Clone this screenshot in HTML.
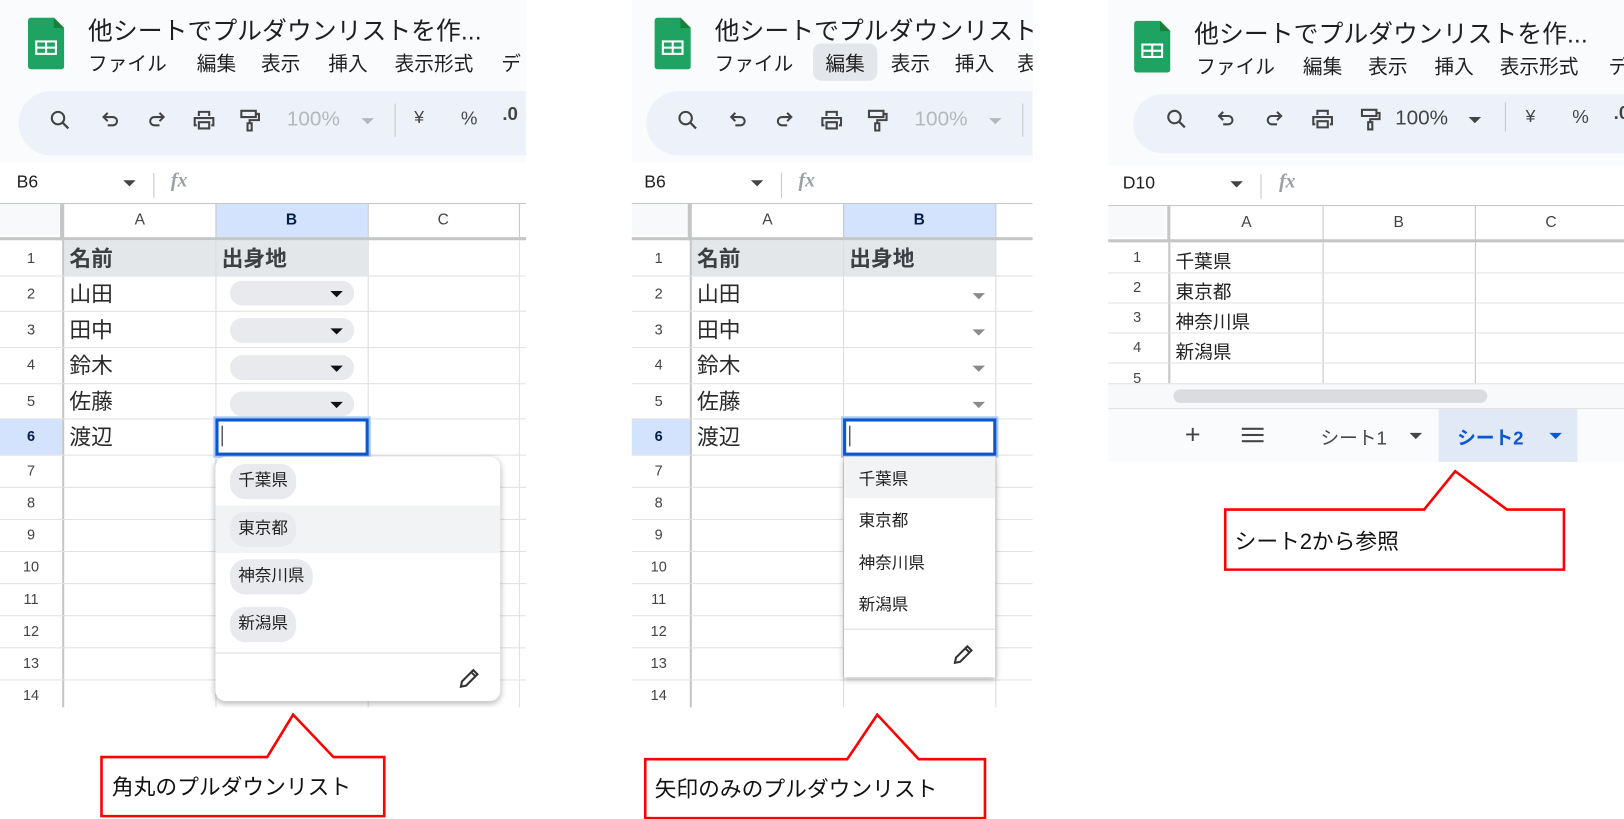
<!DOCTYPE html>
<html><head><meta charset="utf-8">
<style>
*{margin:0;padding:0;box-sizing:border-box}
html,body{width:1624px;height:819px;overflow:hidden;background:#fff}
body{font-family:"Liberation Sans","Noto Sans CJK JP",sans-serif;color:#1f1f1f}
#root{position:absolute;left:0;top:0;width:1568px;height:791px;transform:scale(1.03571);transform-origin:0 0}
.p{position:absolute;top:0;overflow:hidden;background:#fff}
.in{position:absolute;left:0;top:0;width:700px;height:800px}
.a{position:absolute;white-space:nowrap}
.hdr{position:absolute;left:0;top:0;width:700px;height:157px;background:#f9fbfd}
.title{font-size:24px;top:10px;color:#1f1f1f}
.menu{font-size:19px;top:47px;color:#1f1f1f}
.tb{position:absolute;left:18px;top:88px;width:700px;height:62px;border-radius:31px;background:#edf2fa}
.ic{position:absolute;top:104px}
.hl{position:absolute;height:1px;background:#e1e1e1}
.vl{position:absolute;width:1px;background:#e1e1e1}
.rn{position:absolute;left:0;width:60px;text-align:center;font-size:14px;color:#444}
.cell{font-size:21px;color:#2a2a2a}
.chip{position:absolute;left:222px;width:120px;height:24px;border-radius:12px;background:#e8eaed}
.tri{position:absolute;width:0;height:0;border-left:6px solid transparent;border-right:6px solid transparent;border-top:6px solid #111}
.tri2{position:absolute;width:0;height:0;border-left:6px solid transparent;border-right:6px solid transparent;border-top:6px solid #8a8a8a}
.dd{position:absolute;background:#fff;box-shadow:0 2px 6px rgba(0,0,0,.3)}
.pill{position:absolute;left:14px;height:34px;line-height:34px;padding:0 8px;border-radius:15px;background:#e8eaed;font-size:16px;color:#222}
.cl{position:absolute;font-size:21px;color:#111}
</style></head><body><div id="root">

<!-- PANEL 1 -->
<div class="p" style="left:0;width:508px;height:683px"><div class="in">
<div class="hdr"></div>
<svg class="a" style="left:27px;top:17px" width="35" height="50" viewBox="0 0 35 50"><path d="M3 0H25L35 10V47a3 3 0 0 1-3 3H3a3 3 0 0 1-3-3V3a3 3 0 0 1 3-3z" fill="#1ea362"/><path d="M25 0L35 10H25z" fill="#188038"/><rect x="7" y="22" width="21" height="14" fill="#fff"/><rect x="9" y="24" width="7.5" height="4" fill="#1ea362"/><rect x="18.5" y="24" width="7.5" height="4" fill="#1ea362"/><rect x="9" y="30" width="7.5" height="4" fill="#1ea362"/><rect x="18.5" y="30" width="7.5" height="4" fill="#1ea362"/></svg>
<div class="a title" style="left:85px">他シートでプルダウンリストを作...</div>
<div class="a menu" style="left:85px">ファイル</div>
<div class="a menu" style="left:190px">編集</div>
<div class="a menu" style="left:252px">表示</div>
<div class="a menu" style="left:317px">挿入</div>
<div class="a menu" style="left:381px">表示形式</div>
<div class="a menu" style="left:484px">デ</div>
<div class="tb"></div>
<svg class="ic" style="left:46px" width="24" height="24" viewBox="0 0 24 24"><circle cx="10" cy="10" r="6" fill="none" stroke="#444" stroke-width="2"/><path d="M14.5 14.5L20 20" stroke="#444" stroke-width="2.2"/></svg>
<svg class="ic" style="left:95px" width="24" height="24" viewBox="0 0 24 24"><path d="M6 9H14a4 4 0 0 1 0 8H9M9 5L5 9l4 4" fill="none" stroke="#444" stroke-width="2"/></svg>
<svg class="ic" style="left:139px" width="24" height="24" viewBox="0 0 24 24"><path d="M18 9H10a4 4 0 0 0 0 8H15M15 5l4 4-4 4" fill="none" stroke="#444" stroke-width="2"/></svg>
<svg class="ic" style="left:185px" width="24" height="24" viewBox="0 0 24 24"><path d="M7 8V4h10v4M5 17H3V10h18v7h-2M7 14h10v6H7z" fill="none" stroke="#444" stroke-width="2"/></svg>
<svg class="ic" style="left:229px" width="24" height="24" viewBox="0 0 24 24"><path d="M4 3h14v6H4zM18 6h3v6h-9v3M10 15h4v7h-4z" fill="none" stroke="#444" stroke-width="2"/></svg>
<div class="a" style="left:277px;top:104px;font-size:20px;color:#b4b8bc">100%</div>
<div class="tri" style="left:349px;top:114px;border-top-color:#b4b8bc"></div>
<div class="a" style="left:381px;top:100px;width:1px;height:32px;background:#c4c7c5"></div>
<div class="a" style="left:400px;top:104px;font-size:17px;color:#444">¥</div>
<div class="a" style="left:445px;top:104px;font-size:18px;color:#444">%</div>
<div class="a" style="left:485px;top:100px;font-size:18px;color:#444;font-weight:bold">.0</div>
<div class="a" style="left:16px;top:166px;font-size:17px;color:#1f1f1f">B6</div>
<div class="tri" style="left:119px;top:174px;border-top-color:#444"></div>
<div class="a" style="left:148px;top:167px;width:1px;height:24px;background:#c4c7c5"></div>
<div class="a" style="left:165px;top:164px;font-size:19px;color:#9aa0a6;font-style:italic;font-family:'Liberation Serif',serif;font-weight:bold">fx</div>
<div class="hl" style="left:0;top:196px;width:700px;background:#c4c7c5"></div>
<div class="a" style="left:0;top:197px;width:57px;height:30px;background:#f8f9fa"></div>
<div class="a" style="left:58px;top:197px;width:4px;height:35px;background:#c4c7c5"></div>
<div class="a" style="left:208px;top:197px;width:147px;height:35px;background:#d3e3fd"></div>
<div class="a" style="left:0;top:229px;width:700px;height:3px;background:#c4c7c5"></div>
<div class="a" style="left:62px;top:204px;width:146px;text-align:center;font-size:15px;color:#444">A</div>
<div class="a" style="left:208px;top:204px;width:147px;text-align:center;font-size:15px;color:#041e49;font-weight:bold">B</div>
<div class="a" style="left:355px;top:204px;width:146px;text-align:center;font-size:15px;color:#444">C</div>
<div class="vl" style="left:208px;top:197px;height:32px;background:#c4c7c5"></div>
<div class="vl" style="left:355px;top:197px;height:32px;background:#c4c7c5"></div>
<div class="vl" style="left:501px;top:197px;height:32px;background:#c4c7c5"></div>
<div class="a" style="left:62px;top:232px;width:293px;height:34px;background:#e4e7ea"></div>
<div class="a" style="left:0;top:404px;width:60px;height:35px;background:#d3e3fd"></div>
<div class="vl" style="left:60px;top:232px;height:460px;width:2px;background:#c4c7c5"></div>
<div class="vl" style="left:208px;top:232px;height:460px;background:#dadce0"></div>
<div class="vl" style="left:355px;top:232px;height:460px;background:#dadce0"></div>
<div class="vl" style="left:501px;top:232px;height:460px"></div>
<div class="hl" style="left:0;top:266px;width:700px"></div>
<div class="hl" style="left:0;top:300px;width:700px"></div>
<div class="hl" style="left:0;top:335px;width:700px"></div>
<div class="hl" style="left:0;top:370px;width:700px"></div>
<div class="hl" style="left:0;top:404px;width:700px"></div>
<div class="hl" style="left:0;top:439px;width:700px"></div>
<div class="hl" style="left:0;top:470px;width:700px"></div>
<div class="hl" style="left:0;top:501px;width:700px"></div>
<div class="hl" style="left:0;top:532px;width:700px"></div>
<div class="hl" style="left:0;top:563px;width:700px"></div>
<div class="hl" style="left:0;top:594px;width:700px"></div>
<div class="hl" style="left:0;top:625px;width:700px"></div>
<div class="hl" style="left:0;top:656px;width:700px"></div>
<div class="rn" style="top:241px">1</div><div class="rn" style="top:275px">2</div><div class="rn" style="top:310px">3</div><div class="rn" style="top:344px">4</div><div class="rn" style="top:379px">5</div><div class="rn" style="top:413px;font-weight:bold;color:#041e49">6</div><div class="rn" style="top:446px">7</div><div class="rn" style="top:477px">8</div><div class="rn" style="top:508px">9</div><div class="rn" style="top:539px">10</div><div class="rn" style="top:570px">11</div><div class="rn" style="top:601px">12</div><div class="rn" style="top:632px">13</div><div class="rn" style="top:663px">14</div>
<div class="a cell" style="left:67px;top:234px;font-weight:bold;color:#3c4043">名前</div>
<div class="a cell" style="left:214px;top:234px;font-weight:bold;color:#3c4043">出身地</div>
<div class="a cell" style="left:67px;top:268px">山田</div>
<div class="a cell" style="left:67px;top:303px">田中</div>
<div class="a cell" style="left:67px;top:337px">鈴木</div>
<div class="a cell" style="left:67px;top:372px">佐藤</div>
<div class="a cell" style="left:67px;top:406px">渡辺</div>
<div class="chip" style="top:271px"></div><div class="tri" style="left:319px;top:281px"></div>
<div class="chip" style="top:307px"></div><div class="tri" style="left:319px;top:317px"></div>
<div class="chip" style="top:343px"></div><div class="tri" style="left:319px;top:353px"></div>
<div class="chip" style="top:378px"></div><div class="tri" style="left:319px;top:388px"></div>
<div class="a" style="left:206px;top:402px;width:152px;height:40px;border:2px solid #a8c7fa"></div>
<div class="a" style="left:208px;top:404px;width:148px;height:36px;border:3px solid #0b57d0"></div>
<div class="a" style="left:214px;top:411px;width:1px;height:20px;background:#111"></div>
<div class="dd" style="left:208px;top:441px;width:275px;height:236px;border-radius:10px">
<div class="a" style="left:0;top:47px;width:275px;height:46px;background:#f1f3f4"></div>
<div class="pill" style="top:7px">千葉県</div>
<div class="pill" style="top:53px">東京都</div>
<div class="pill" style="top:99px">神奈川県</div>
<div class="pill" style="top:145px">新潟県</div>
<div class="a" style="left:0;top:189px;width:275px;height:1px;background:#dadce0"></div>
<svg class="a" style="left:234px;top:203px" width="22" height="22" viewBox="0 0 22 22"><path d="M3 19l1-5L15 3l4 4L8 18z M13 5l4 4" fill="none" stroke="#333" stroke-width="2"/></svg>
</div>
</div></div>

<!-- PANEL 2 -->
<div class="p" style="left:610px;width:387px;height:683px"><div class="in" style="left:-4px">
<div class="hdr"></div>
<svg class="a" style="left:26px;top:17px" width="35" height="50" viewBox="0 0 35 50"><path d="M3 0H25L35 10V47a3 3 0 0 1-3 3H3a3 3 0 0 1-3-3V3a3 3 0 0 1 3-3z" fill="#1ea362"/><path d="M25 0L35 10H25z" fill="#188038"/><rect x="7" y="22" width="21" height="14" fill="#fff"/><rect x="9" y="24" width="7.5" height="4" fill="#1ea362"/><rect x="18.5" y="24" width="7.5" height="4" fill="#1ea362"/><rect x="9" y="30" width="7.5" height="4" fill="#1ea362"/><rect x="18.5" y="30" width="7.5" height="4" fill="#1ea362"/></svg>
<div class="a title" style="left:84px">他シートでプルダウンリスト</div>
<div class="a" style="left:179px;top:42px;width:62px;height:36px;border-radius:8px;background:#e3e6ea"></div>
<div class="a menu" style="left:84px">ファイル</div>
<div class="a menu" style="left:191px">編集</div>
<div class="a menu" style="left:254px">表示</div>
<div class="a menu" style="left:316px">挿入</div>
<div class="a menu" style="left:376px">表示形式</div>
<div class="tb"></div>
<svg class="ic" style="left:46px" width="24" height="24" viewBox="0 0 24 24"><circle cx="10" cy="10" r="6" fill="none" stroke="#444" stroke-width="2"/><path d="M14.5 14.5L20 20" stroke="#444" stroke-width="2.2"/></svg>
<svg class="ic" style="left:95px" width="24" height="24" viewBox="0 0 24 24"><path d="M6 9H14a4 4 0 0 1 0 8H9M9 5L5 9l4 4" fill="none" stroke="#444" stroke-width="2"/></svg>
<svg class="ic" style="left:139px" width="24" height="24" viewBox="0 0 24 24"><path d="M18 9H10a4 4 0 0 0 0 8H15M15 5l4 4-4 4" fill="none" stroke="#444" stroke-width="2"/></svg>
<svg class="ic" style="left:185px" width="24" height="24" viewBox="0 0 24 24"><path d="M7 8V4h10v4M5 17H3V10h18v7h-2M7 14h10v6H7z" fill="none" stroke="#444" stroke-width="2"/></svg>
<svg class="ic" style="left:229px" width="24" height="24" viewBox="0 0 24 24"><path d="M4 3h14v6H4zM18 6h3v6h-9v3M10 15h4v7h-4z" fill="none" stroke="#444" stroke-width="2"/></svg>
<div class="a" style="left:277px;top:104px;font-size:20px;color:#b4b8bc">100%</div>
<div class="tri" style="left:349px;top:114px;border-top-color:#b4b8bc"></div>
<div class="a" style="left:381px;top:100px;width:1px;height:32px;background:#c4c7c5"></div>
<div class="a" style="left:16px;top:166px;font-size:17px;color:#1f1f1f">B6</div>
<div class="tri" style="left:119px;top:174px;border-top-color:#444"></div>
<div class="a" style="left:148px;top:167px;width:1px;height:24px;background:#c4c7c5"></div>
<div class="a" style="left:165px;top:164px;font-size:19px;color:#9aa0a6;font-style:italic;font-family:'Liberation Serif',serif;font-weight:bold">fx</div>
<div class="hl" style="left:0;top:196px;width:700px;background:#c4c7c5"></div>
<div class="a" style="left:0;top:197px;width:57px;height:30px;background:#f8f9fa"></div>
<div class="a" style="left:58px;top:197px;width:4px;height:35px;background:#c4c7c5"></div>
<div class="a" style="left:208px;top:197px;width:147px;height:35px;background:#d3e3fd"></div>
<div class="a" style="left:0;top:229px;width:700px;height:3px;background:#c4c7c5"></div>
<div class="a" style="left:62px;top:204px;width:146px;text-align:center;font-size:15px;color:#444">A</div>
<div class="a" style="left:208px;top:204px;width:147px;text-align:center;font-size:15px;color:#041e49;font-weight:bold">B</div>
<div class="vl" style="left:208px;top:197px;height:32px;background:#c4c7c5"></div>
<div class="vl" style="left:355px;top:197px;height:32px;background:#c4c7c5"></div>
<div class="a" style="left:62px;top:232px;width:293px;height:34px;background:#e4e7ea"></div>
<div class="a" style="left:0;top:404px;width:60px;height:35px;background:#d3e3fd"></div>
<div class="vl" style="left:60px;top:232px;height:460px;width:2px;background:#c4c7c5"></div>
<div class="vl" style="left:208px;top:232px;height:460px;background:#dadce0"></div>
<div class="vl" style="left:355px;top:232px;height:460px;background:#dadce0"></div>
<div class="hl" style="left:0;top:266px;width:700px"></div>
<div class="hl" style="left:0;top:300px;width:700px"></div>
<div class="hl" style="left:0;top:335px;width:700px"></div>
<div class="hl" style="left:0;top:370px;width:700px"></div>
<div class="hl" style="left:0;top:404px;width:700px"></div>
<div class="hl" style="left:0;top:439px;width:700px"></div>
<div class="hl" style="left:0;top:470px;width:700px"></div>
<div class="hl" style="left:0;top:501px;width:700px"></div>
<div class="hl" style="left:0;top:532px;width:700px"></div>
<div class="hl" style="left:0;top:563px;width:700px"></div>
<div class="hl" style="left:0;top:594px;width:700px"></div>
<div class="hl" style="left:0;top:625px;width:700px"></div>
<div class="hl" style="left:0;top:656px;width:700px"></div>
<div class="rn" style="top:241px">1</div><div class="rn" style="top:275px">2</div><div class="rn" style="top:310px">3</div><div class="rn" style="top:344px">4</div><div class="rn" style="top:379px">5</div><div class="rn" style="top:413px;font-weight:bold;color:#041e49">6</div><div class="rn" style="top:446px">7</div><div class="rn" style="top:477px">8</div><div class="rn" style="top:508px">9</div><div class="rn" style="top:539px">10</div><div class="rn" style="top:570px">11</div><div class="rn" style="top:601px">12</div><div class="rn" style="top:632px">13</div><div class="rn" style="top:663px">14</div>
<div class="a cell" style="left:67px;top:234px;font-weight:bold;color:#3c4043">名前</div>
<div class="a cell" style="left:214px;top:234px;font-weight:bold;color:#3c4043">出身地</div>
<div class="a cell" style="left:67px;top:268px">山田</div>
<div class="a cell" style="left:67px;top:303px">田中</div>
<div class="a cell" style="left:67px;top:337px">鈴木</div>
<div class="a cell" style="left:67px;top:372px">佐藤</div>
<div class="a cell" style="left:67px;top:406px">渡辺</div>
<div class="tri2" style="left:333px;top:283px"></div>
<div class="tri2" style="left:333px;top:318px"></div>
<div class="tri2" style="left:333px;top:353px"></div>
<div class="tri2" style="left:333px;top:388px"></div>
<div class="a" style="left:206px;top:402px;width:152px;height:40px;border:2px solid #a8c7fa"></div>
<div class="a" style="left:208px;top:404px;width:148px;height:36px;border:3px solid #0b57d0"></div>
<div class="a" style="left:214px;top:411px;width:1px;height:20px;background:#111"></div>
<div class="dd" style="left:209px;top:441px;width:146px;height:213px">
<div class="a" style="left:0;top:0;width:146px;height:40px;background:#f1f3f4"></div>
<div class="a" style="left:14px;top:8px;font-size:16px;color:#222">千葉県</div>
<div class="a" style="left:14px;top:48px;font-size:16px;color:#222">東京都</div>
<div class="a" style="left:14px;top:89px;font-size:16px;color:#222">神奈川県</div>
<div class="a" style="left:14px;top:129px;font-size:16px;color:#222">新潟県</div>
<div class="a" style="left:0;top:166px;width:146px;height:1px;background:#dadce0"></div>
<svg class="a" style="left:104px;top:180px" width="22" height="22" viewBox="0 0 22 22"><path d="M3 19l1-5L15 3l4 4L8 18z M13 5l4 4" fill="none" stroke="#333" stroke-width="2"/></svg>
</div>
</div></div>

<!-- PANEL 3 -->
<div class="p" style="left:1070px;width:498px;height:446px"><div class="in" style="left:-2px;top:3px">
<div class="hdr" style="top:-3px;height:160px"></div>
<svg class="a" style="left:27px;top:17px" width="35" height="50" viewBox="0 0 35 50"><path d="M3 0H25L35 10V47a3 3 0 0 1-3 3H3a3 3 0 0 1-3-3V3a3 3 0 0 1 3-3z" fill="#1ea362"/><path d="M25 0L35 10H25z" fill="#188038"/><rect x="7" y="22" width="21" height="14" fill="#fff"/><rect x="9" y="24" width="7.5" height="4" fill="#1ea362"/><rect x="18.5" y="24" width="7.5" height="4" fill="#1ea362"/><rect x="9" y="30" width="7.5" height="4" fill="#1ea362"/><rect x="18.5" y="30" width="7.5" height="4" fill="#1ea362"/></svg>
<div class="a title" style="left:85px">他シートでプルダウンリストを作...</div>
<div class="a menu" style="left:87px">ファイル</div>
<div class="a menu" style="left:190px">編集</div>
<div class="a menu" style="left:253px">表示</div>
<div class="a menu" style="left:317px">挿入</div>
<div class="a menu" style="left:380px">表示形式</div>
<div class="a menu" style="left:485px">デ</div>
<div class="tb" style="left:26px;height:57px"></div>
<svg class="ic" style="left:56px;top:100px" width="24" height="24" viewBox="0 0 24 24"><circle cx="10" cy="10" r="6" fill="none" stroke="#444" stroke-width="2"/><path d="M14.5 14.5L20 20" stroke="#444" stroke-width="2.2"/></svg>
<svg class="ic" style="left:104px;top:100px" width="24" height="24" viewBox="0 0 24 24"><path d="M6 9H14a4 4 0 0 1 0 8H9M9 5L5 9l4 4" fill="none" stroke="#444" stroke-width="2"/></svg>
<svg class="ic" style="left:150px;top:100px" width="24" height="24" viewBox="0 0 24 24"><path d="M18 9H10a4 4 0 0 0 0 8H15M15 5l4 4-4 4" fill="none" stroke="#444" stroke-width="2"/></svg>
<svg class="ic" style="left:197px;top:100px" width="24" height="24" viewBox="0 0 24 24"><path d="M7 8V4h10v4M5 17H3V10h18v7h-2M7 14h10v6H7z" fill="none" stroke="#444" stroke-width="2"/></svg>
<svg class="ic" style="left:243px;top:100px" width="24" height="24" viewBox="0 0 24 24"><path d="M4 3h14v6H4zM18 6h3v6h-9v3M10 15h4v7h-4z" fill="none" stroke="#444" stroke-width="2"/></svg>
<div class="a" style="left:279px;top:100px;font-size:20px;color:#444">100%</div>
<div class="tri" style="left:350px;top:110px;border-top-color:#444"></div>
<div class="a" style="left:385px;top:96px;width:1px;height:28px;background:#c4c7c5"></div>
<div class="a" style="left:405px;top:100px;font-size:17px;color:#444">¥</div>
<div class="a" style="left:450px;top:100px;font-size:18px;color:#444">%</div>
<div class="a" style="left:490px;top:96px;font-size:18px;color:#444;font-weight:bold">.0</div>
<div class="a" style="left:16px;top:164px;font-size:17px;color:#1f1f1f">D10</div>
<div class="tri" style="left:120px;top:172px;border-top-color:#444"></div>
<div class="a" style="left:149px;top:165px;width:1px;height:24px;background:#c4c7c5"></div>
<div class="a" style="left:167px;top:162px;font-size:19px;color:#9aa0a6;font-style:italic;font-family:'Liberation Serif',serif;font-weight:bold">fx</div>
<div class="hl" style="left:0;top:195px;width:700px;background:#c4c7c5"></div>
<div class="a" style="left:0;top:196px;width:58px;height:30px;background:#f8f9fa"></div>
<div class="a" style="left:59px;top:196px;width:3px;height:35px;background:#c4c7c5"></div>
<div class="a" style="left:0;top:228px;width:700px;height:3px;background:#c4c7c5"></div>
<div class="a" style="left:62px;top:203px;width:147px;text-align:center;font-size:15px;color:#444">A</div>
<div class="a" style="left:209px;top:203px;width:147px;text-align:center;font-size:15px;color:#444">B</div>
<div class="a" style="left:356px;top:203px;width:147px;text-align:center;font-size:15px;color:#444">C</div>
<div class="vl" style="left:209px;top:196px;height:171px;background:#c4c7c5"></div>
<div class="vl" style="left:356px;top:196px;height:171px;background:#c4c7c5"></div>
<div class="vl" style="left:60px;top:231px;height:136px;width:2px;background:#c4c7c5"></div>
<div class="hl" style="left:0;top:260px;width:700px"></div>
<div class="hl" style="left:0;top:289px;width:700px"></div>
<div class="hl" style="left:0;top:318px;width:700px"></div>
<div class="hl" style="left:0;top:347px;width:700px"></div>
<div class="rn" style="top:237px">1</div><div class="rn" style="top:266px">2</div><div class="rn" style="top:295px">3</div><div class="rn" style="top:324px">4</div><div class="rn" style="top:354px">5</div>
<div class="a" style="left:67px;top:236px;font-size:18px;color:#222">千葉県</div>
<div class="a" style="left:67px;top:265px;font-size:18px;color:#222">東京都</div>
<div class="a" style="left:67px;top:294px;font-size:18px;color:#222">神奈川県</div>
<div class="a" style="left:67px;top:323px;font-size:18px;color:#222">新潟県</div>
<div class="a" style="left:0;top:367px;width:700px;height:24px;background:#f8f9fa;border-top:1px solid #e1e1e1"></div>
<div class="a" style="left:65px;top:373px;width:303px;height:13px;border-radius:7px;background:#dadce0"></div>
<div class="a" style="left:0;top:391px;width:700px;height:52px;background:#f9fbfd;border-top:1px solid #e1e1e1"></div>
<div class="a" style="left:76px;top:401px;font-size:26px;color:#444">+</div>
<div class="a" style="left:131px;top:410px;width:21px;height:2px;background:#444;box-shadow:0 6px 0 #444,0 12px 0 #444"></div>
<div class="a" style="left:207px;top:406px;font-size:18px;color:#444">シート1</div>
<div class="tri" style="left:293px;top:415px;border-top-color:#444"></div>
<div class="a" style="left:321px;top:392px;width:134px;height:51px;background:#e1e9f7"></div>
<div class="a" style="left:339px;top:406px;font-size:18px;color:#0b57d0;font-weight:bold">シート2</div>
<div class="tri" style="left:428px;top:415px;border-top-color:#0b57d0"></div>
</div></div>

<!-- CALLOUTS -->
<svg class="a" style="left:0;top:0" width="1568" height="791" viewBox="0 0 1568 791">
<path d="M98 731H258L283 690L322 731H371V788H98Z" fill="#fff" stroke="#f00" stroke-width="2.5"/>
<path d="M623 733H818L847 690L887 733H951V790H623Z" fill="#fff" stroke="#f00" stroke-width="2.5"/>
<path d="M1183 492H1375L1405 455L1455 492H1510V550H1183Z" fill="#fff" stroke="#f00" stroke-width="2.5"/>
</svg>
<div class="cl" style="left:108px;top:744px">角丸のプルダウンリスト</div>
<div class="cl" style="left:632px;top:746px">矢印のみのプルダウンリスト</div>
<div class="cl" style="left:1192px;top:507px">シート2から参照</div>

</div></body></html>
